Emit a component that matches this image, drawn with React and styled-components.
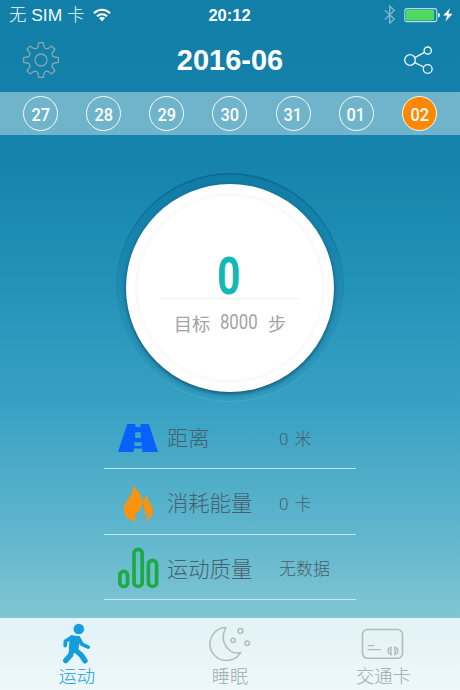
import React from 'react';
import styled, { createGlobalStyle } from 'styled-components';

const GlobalStyle = createGlobalStyle`
  * { box-sizing: border-box; }
  body {
    margin: 0;
    font-family: 'Liberation Sans', 'Noto Sans CJK SC', sans-serif;
    -webkit-font-smoothing: antialiased;
  }
`;

const Screen = styled.div`
  width: 460px;
  height: 690px;
  display: flex;
  flex-direction: column;
  overflow: hidden;
  background: linear-gradient(#127fa8 0px, #1482aa 150px, #1b8cb3 230px, #36a0c3 400px, #5cb4cc 520px, #80c6d3 618px, #8acbd6 690px);
`;

const StatusBar = styled.div`
  height: 30px;
  display: grid;
  grid-template-columns: 1fr auto 1fr;
  align-items: center;
  padding: 0 7px 0 9px;
  color: #f4fbfd;
`;

const Carrier = styled.div`
  display: flex;
  align-items: center;
  gap: 9px;
  font-size: 17.4px;
  font-weight: 300;
  line-height: 30px;
  white-space: nowrap;
`;

const Clock = styled.div`
  margin-left: -3px;
  font-size: 16.5px;
  font-weight: 700;
  color: #fff;
`;

const Indicators = styled.div`
  display: flex;
  justify-content: flex-end;
  align-items: center;
`;

const Header = styled.header`
  height: 62px;
  display: flex;
  align-items: center;
  justify-content: space-between;
  padding: 0 22px 2px;
`;

const Title = styled.h1`
  margin: 0;
  padding: 0 4px 1px 0;
  font-size: 29px;
  line-height: 32px;
  font-weight: 700;
  color: #fff;
`;

const IconSvg = styled.svg`
  display: block;
  flex: none;
  overflow: visible;
`;

const DateStrip = styled.nav`
  height: 43px;
  flex: none;
  display: flex;
  align-items: center;
  justify-content: space-between;
  padding: 0 23px;
  background: #70b4cc;
`;

const Day = styled.div`
  width: 35px;
  height: 35px;
  border: 1.6px solid #f5fbfd;
  border-radius: 50%;
  display: flex;
  align-items: center;
  justify-content: center;
  padding-top: 1px;
  background: ${(p) => (p.$active ? '#ff8800' : 'transparent')};
  color: #fff;
`;

const Digits = styled.span`
  font-family: Roboto, sans-serif;
  font-size: ${(p) => p.$size}px;
  font-weight: ${(p) => p.$weight || 400};
  line-height: 1;
  display: inline-block;
  transform: scaleX(${(p) => p.$squeeze});
`;

const DialArea = styled.section`
  height: 269px;
  flex: none;
  display: flex;
  justify-content: center;
  padding-top: 38px;
`;

const DialRing = styled.div`
  width: 228px;
  height: 229px;
  border-radius: 50%;
  display: flex;
  justify-content: center;
  align-items: center;
  background: linear-gradient(rgba(0, 95, 145, 0.25), rgba(20, 130, 170, 0.12));
  box-shadow: inset 0 1.5px 1px rgba(0, 55, 85, 0.28), inset 0 -1px 1px rgba(150, 220, 240, 0.22);
`;

const DialFace = styled.div`
  width: 208px;
  height: 208px;
  border-radius: 50%;
  padding: 9px;
  background: #fff;
  box-shadow: 0 2px 4px rgba(0, 40, 60, 0.6);
`;

const DialInner = styled.div`
  width: 190px;
  height: 190px;
  border: 3px solid #fafafa;
  border-radius: 50%;
  display: flex;
  flex-direction: column;
  align-items: center;
`;

const StepCount = styled.div`
  height: 103px;
  width: 140px;
  display: flex;
  justify-content: center;
  padding: 55px 2px 0 0;
  border-bottom: 1px solid #f0f0f0;
  color: #12b8b5;
`;

const Goal = styled.div`
  height: 48px;
  display: flex;
  align-items: center;
  font-size: 18.3px;
  font-weight: 400;
  color: #a3a3a3;
  white-space: nowrap;
`;

const Stats = styled.section`
  width: 252px;
  margin: 0 auto;
  flex: 1;
`;

const StatRow = styled.div`
  height: 65.3px;
  display: grid;
  grid-template-columns: 63px 112px 1fr;
  align-items: center;
  border-bottom: 1.5px solid #c4e6ef;
  color: #485f6c;
`;

const StatIcon = styled.div`
  padding: 3px 0 0 14px;
`;

const StatLabel = styled.div`
  padding-top: 6px;
  font-size: 21.3px;
  font-weight: 300;
  line-height: 30px;
  white-space: nowrap;
`;

const StatValue = styled.div`
  padding-top: 5px;
  font-family: Roboto, 'Noto Sans CJK SC', sans-serif;
  font-size: 17px;
  font-weight: 300;
  line-height: 26px;
  word-spacing: 2px;
  white-space: nowrap;
`;

const TabBar = styled.nav`
  height: 72px;
  flex: none;
  display: grid;
  grid-template-columns: repeat(3, 1fr);
  background: linear-gradient(#e2f2f6, #eef8fa);
`;

const Tab = styled.div`
  display: flex;
  flex-direction: column;
  align-items: center;
  color: ${(p) => (p.$active ? '#159edb' : '#9dabad')};
`;

const TabLabel = styled.span`
  margin-top: -2px;
  font-size: 18.3px;
  font-weight: 300;
  line-height: 26px;
`;

const gearPath = (() => {
  const at = (radial, side, angle) => {
    const x = radial * Math.cos(angle) - side * Math.sin(angle);
    const y = radial * Math.sin(angle) + side * Math.cos(angle);
    return `${x.toFixed(2)} ${y.toFixed(2)}`;
  };
  const points = [];
  for (let i = 0; i < 8; i += 1) {
    const a = (i * Math.PI) / 4;
    points.push(at(12, -3.6, a), at(13.3, -3, a), at(17.4, -2.3, a), at(17.4, 2.3, a), at(13.3, 3, a), at(12, 3.6, a));
  }
  return `M${points.join('L')}Z`;
})();

const GearIcon = () => (
  <IconSvg width="38" height="38" viewBox="-19 -19 38 38" fill="none" stroke="#8ba6ab" strokeWidth="1.3" strokeLinejoin="round">
    <path d={gearPath} />
    <circle r="6" />
  </IconSvg>
);

const ShareIcon = () => (
  <IconSvg width="34" height="30" viewBox="0 0 34 30" fill="none" stroke="#f2fafc" strokeWidth="1.3">
    <circle cx="6" cy="15" r="5.3" />
    <circle cx="23.7" cy="5.6" r="3.6" />
    <circle cx="23.7" cy="24" r="4.4" />
    <path d="M10.8 12.6 20.5 7.4M10.6 17.7 19.8 22" />
  </IconSvg>
);

const WifiIcon = () => (
  <IconSvg width="18" height="14" viewBox="0 0 18 14" fill="none" stroke="#fff" strokeWidth="2.1">
    <path d="M1 5.2C5.6.6 12.4.6 17 5.2M4 8.3c2.8-2.8 7.2-2.8 10 0" />
    <path d="M5.9 10.1c1.8-1.6 4.4-1.6 6.2 0L9 13.2Z" fill="#fff" stroke="none" />
  </IconSvg>
);

const BatteryIcons = () => (
  <IconSvg width="69" height="20" viewBox="0 0 69 20" fill="none">
    <path d="M.8 5.3 10.3 14 5.7 18.2V1.2l4.6 4.2L.8 14.4" stroke="#78b7ce" strokeWidth="1.4" />
    <rect x="20.8" y="3.6" width="32" height="13" rx="2.2" stroke="#b5dce6" strokeWidth="1.1" />
    <rect x="22" y="4.8" width="28.2" height="10.6" rx="1" fill="#4fdb62" />
    <path d="M54 7.7q2 .2 2 2.4t-2 2.4Z" fill="#e5f6fa" />
    <path d="m66 3.2-6.8 7.4h4l-1.8 6 7.2-7.8h-4.2Z" fill="#fff" />
  </IconSvg>
);

const RoadIcon = () => (
  <IconSvg width="40" height="30" viewBox="0 0 40 30" fill="#0761fb">
    <path d="M9.2 1H17.4V4H22.6V1H30.8L40 29H24.3V25.5H15.7V29H0ZM17.2 9.2V15H22.8V9.2Z M16.4 19.3V23H23.6V19.3Z" fillRule="evenodd" />
  </IconSvg>
);

const FlameIcon = () => (
  <IconSvg width="40" height="40" viewBox="0 0 40 40">
    <path
      d="M15.4 .6C16.2 7 24.2 8.5 23.7 19.2C25.4 17.5 25.4 15 29.4 12.4C28.8 19 35 21 34.8 28C34.6 33.5 31.2 37 27.8 38.7C29.5 35.4 30.5 32.8 28.6 29.5L26.5 32L26.1 20.2C22.3 24.2 21.2 27.5 20.8 31L18.4 28.7C16.1 32.2 16.4 35.5 18.3 38.6C11.1 37.8 6 32.5 5.9 26.4C5.8 18.5 16.4 13 15.4 .6Z"
      fill="#fb930e"
    />
  </IconSvg>
);

const BarsIcon = () => (
  <IconSvg width="42" height="42" viewBox="0 0 42 42" fill="none" stroke="#1aab45" strokeWidth="3.7">
    <rect x="1.9" y="24.4" width="7.7" height="15.1" rx="3.8" />
    <rect x="16" y="2.4" width="8.2" height="37.1" rx="4.1" />
    <rect x="30.4" y="13.3" width="8.2" height="26.2" rx="4.1" />
  </IconSvg>
);

const WalkIcon = () => (
  <IconSvg width="44" height="48" viewBox="0 0 44 48" fill="none" stroke="#159edb" strokeLinecap="round" strokeLinejoin="round">
    <circle cx="23.8" cy="11" r="5.3" fill="#159edb" stroke="none" />
    <path d="M16.5 19 23.6 20 21.8 31 15.5 30.3Z" fill="#159edb" strokeWidth="3.4" />
    <path d="M16.5 19.4 10.4 23.4 10.2 27.6M23.7 20 27 26.3 33.2 29.1" strokeWidth="3.7" />
    <path d="M16.8 32.5 15.6 37 10.8 42.6M19.5 31.4 26.2 37 30 42.8" strokeWidth="5.4" />
  </IconSvg>
);

const MoonIcon = () => (
  <IconSvg width="44" height="48" viewBox="0 0 44 48" fill="none" stroke="#aebdbe" strokeWidth="1.5">
    <path d="M17.5 9.5A16.5 16.5 0 1 0 32.5 34.6C21 37.7 10.5 23.5 17.8 9.8Z" />
    <circle cx="32.5" cy="13" r="2.4" />
    <circle cx="25.1" cy="22.3" r="2.1" />
    <circle cx="39.2" cy="25.3" r="2.3" />
  </IconSvg>
);

const CardIcon = () => (
  <IconSvg width="44" height="48" viewBox="0 0 44 48" fill="none" stroke="#aebdbe" strokeWidth="1.6">
    <rect x="1.5" y="11.5" width="40" height="28.8" rx="5" />
    <path d="M6.5 27.6H13.5M6.5 31.6H20" strokeWidth="1.3" />
    <path d="M31 29.3q-3.8.3-3.8 3.7t3.8 3.7M33 29.3q3.8.3 3.8 3.7T33 36.7M30.5 30.5q-2 2.5 0 5M33.5 30.5q2 2.5 0 5" strokeWidth="1.4" />
  </IconSvg>
);

const days = ['27', '28', '29', '30', '31', '01', '02'];

const stats = [
  { label: '距离', value: '0 米', Icon: RoadIcon },
  { label: '消耗能量', value: '0 卡', Icon: FlameIcon },
  { label: '运动质量', value: '无数据', Icon: BarsIcon },
];

const tabs = [
  { label: '运动', Icon: WalkIcon, active: true },
  { label: '睡眠', Icon: MoonIcon },
  { label: '交通卡', Icon: CardIcon },
];

export default function App() {
  return (
    <Screen>
      <GlobalStyle />
      <StatusBar>
        <Carrier>
          <span>无 SIM 卡</span>
          <WifiIcon />
        </Carrier>
        <Clock>20:12</Clock>
        <Indicators>
          <BatteryIcons />
        </Indicators>
      </StatusBar>
      <Header>
        <GearIcon />
        <Title>2016-06</Title>
        <ShareIcon />
      </Header>
      <DateStrip>
        {days.map((day) => (
          <Day key={day} $active={day === '02'}>
            <Digits $size={19} $weight={500} $squeeze={0.86}>{day}</Digits>
          </Day>
        ))}
      </DateStrip>
      <DialArea>
        <DialRing>
          <DialFace>
            <DialInner>
              <StepCount>
                <Digits $size={51} $weight={700} $squeeze={0.8}>0</Digits>
              </StepCount>
              <Goal>
                <span>目标</span>
                <Digits $size={21} $squeeze={0.8}>&nbsp;8000&nbsp;</Digits>
                <span>步</span>
              </Goal>
            </DialInner>
          </DialFace>
        </DialRing>
      </DialArea>
      <Stats>
        {stats.map(({ label, value, Icon }) => (
          <StatRow key={label}>
            <StatIcon>
              <Icon />
            </StatIcon>
            <StatLabel>{label}</StatLabel>
            <StatValue>{value}</StatValue>
          </StatRow>
        ))}
      </Stats>
      <TabBar>
        {tabs.map(({ label, Icon, active }) => (
          <Tab key={label} $active={active}>
            <Icon />
            <TabLabel>{label}</TabLabel>
          </Tab>
        ))}
      </TabBar>
    </Screen>
  );
}
